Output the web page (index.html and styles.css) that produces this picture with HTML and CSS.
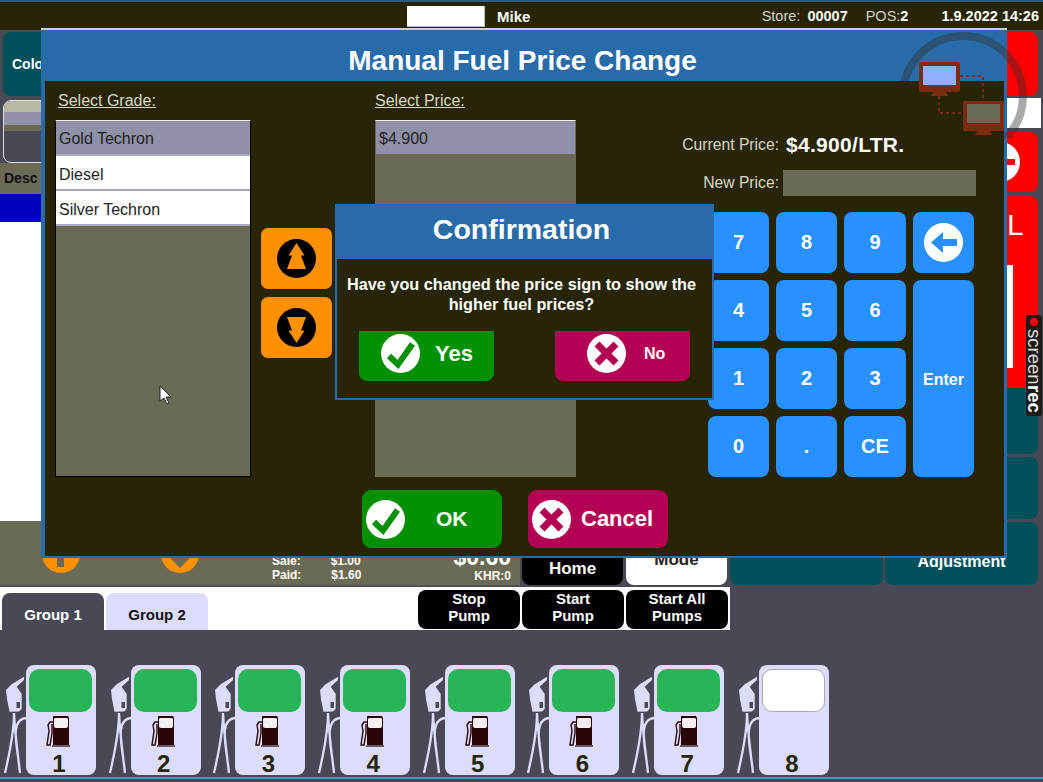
FILE: index.html
```html
<!DOCTYPE html>
<html lang="en">

<head>
    <meta charset="UTF-8">
    <meta name="viewport" content="width=device-width, initial-scale=1.0">
    <title>Manual Fuel Price Change</title>

    <link rel="stylesheet" href="styles.css">
</head>

<body>
    <svg class="defs" width="0" height="0">
        <symbol id="ico-check" viewBox="0 0 39 39">
            <circle cx="19.5" cy="19.5" r="19.5" fill="#fff" />
            <path d="M8 22l9 8.5L31.5 10" fill="none" stroke="#009000" stroke-width="6" />
        </symbol>
        <symbol id="ico-cross" viewBox="0 0 39 39">
            <circle cx="19.5" cy="19.5" r="19.5" fill="#fff" />
            <path d="M10 10l19 19M29 10L10 29" fill="none" stroke="#b40054" stroke-width="7" />
        </symbol>
        <symbol id="ico-nozzle" viewBox="0 0 25 100">
            <path d="M23 1.7L23 5 15.7 11.7 20.7 19V34L18 36.5 8.5 36.7 6 24 5 15 10.7 9.3ZM15.5 27h3.5v6h-3.5z" fill="#dcdcfe" fill-rule="evenodd" />
            <path d="M13 38C13 60 8 80 4 98M13 38C14 60 17 80 19 98M25 43C15 44 14 55 15 65 15.5 75 18 85 19 98" fill="none" stroke="#dcdcfe" stroke-width="2.3" />
        </symbol>
        <symbol id="ico-fuel" viewBox="0 0 24 32">
            <path d="M7 1h15l1 2v27H7z" fill="#2a0505" />
            <path d="M9 3h12l1 1v7q0 2-2 2H10q-2 0-2-2V4z" fill="#f4f0f0" />
            <path d="M6 31h18" stroke="#6a5a5a" stroke-width="2" />
            <path d="M7 7H4L2 10l1 6-2 14h3l2-12V9" fill="none" stroke="#2a0505" stroke-width="1.4" />
        </symbol>
        <clipPath id="ring-clip">
            <path d="M0 0H140V110H108V53H0Z" />
        </clipPath>
    </svg>

    <header class="topbar">
        <div class="user-box"></div>
        <b class="user-name">Mike</b>
        <span class="store">Store: <b>00007</b></span>
        <span class="pos">POS:<b>2</b></span>
        <b class="clock">1.9.2022 14:26</b>
    </header>

    <main class="app">
        <div class="app-left">
            <div class="app-top">
                <div class="color-btn">Colo</div>
                <div class="thumb">
                    <div class="thumb-a"></div>
                    <div class="thumb-b"></div>
                    <div class="thumb-c"></div>
                </div>
            </div>
            <div class="desc-bar">Desc</div>
            <div class="blue-bar"></div>
            <div class="white-list"></div>
            <div class="app-foot">
                <div class="totals">
                    <div class="round-orange"></div>
                    <div class="round-orange second"></div>
                    <div class="sale-lines">
                        <div><span>Sale:</span><span>$1.00</span></div>
                        <div><span>Paid:</span><span>$1.60</span></div>
                    </div>
                    <div class="change">
                        <div class="change-big">$0.60</div>
                        <div>KHR:0</div>
                    </div>
                </div>
                <div class="foot-btn foot-black">Home</div>
                <div class="foot-btn foot-white">Mode</div>
                <div class="foot-btn foot-teal"></div>
            </div>
        </div>
        <div class="app-right">
            <div class="side side-red side-a"></div>
            <div class="side side-white"></div>
            <div class="side side-red side-b"><span class="minus"></span></div>
            <div class="side side-red side-c">
                <span class="side-l">L</span>
                <span class="side-bar"></span>
            </div>
            <div class="side side-teal side-d"></div>
            <div class="side side-teal side-e"></div>
            <div class="side side-teal side-f">Adjustment</div>
        </div>
    </main>

    <section class="tabs-row">
        <div class="tab tab-active">Group 1</div>
        <div class="tab">Group 2</div>
        <div class="pump-btn first">Stop<br>Pump</div>
        <div class="pump-btn">Start<br>Pump</div>
        <div class="pump-btn">Start All<br>Pumps</div>
    </section>

    <section class="pumps">
        <div class="pump">
            <svg class="nozzle"><use href="#ico-nozzle" /></svg>
            <div class="pump-body">
                <div class="pump-screen"></div>
                <svg class="fuel"><use href="#ico-fuel" /></svg>
                <div class="pump-num">1</div>
            </div>
        </div>
        <div class="pump">
            <svg class="nozzle"><use href="#ico-nozzle" /></svg>
            <div class="pump-body">
                <div class="pump-screen"></div>
                <svg class="fuel"><use href="#ico-fuel" /></svg>
                <div class="pump-num">2</div>
            </div>
        </div>
        <div class="pump">
            <svg class="nozzle"><use href="#ico-nozzle" /></svg>
            <div class="pump-body">
                <div class="pump-screen"></div>
                <svg class="fuel"><use href="#ico-fuel" /></svg>
                <div class="pump-num">3</div>
            </div>
        </div>
        <div class="pump">
            <svg class="nozzle"><use href="#ico-nozzle" /></svg>
            <div class="pump-body">
                <div class="pump-screen"></div>
                <svg class="fuel"><use href="#ico-fuel" /></svg>
                <div class="pump-num">4</div>
            </div>
        </div>
        <div class="pump">
            <svg class="nozzle"><use href="#ico-nozzle" /></svg>
            <div class="pump-body">
                <div class="pump-screen"></div>
                <svg class="fuel"><use href="#ico-fuel" /></svg>
                <div class="pump-num">5</div>
            </div>
        </div>
        <div class="pump">
            <svg class="nozzle"><use href="#ico-nozzle" /></svg>
            <div class="pump-body">
                <div class="pump-screen"></div>
                <svg class="fuel"><use href="#ico-fuel" /></svg>
                <div class="pump-num">6</div>
            </div>
        </div>
        <div class="pump">
            <svg class="nozzle"><use href="#ico-nozzle" /></svg>
            <div class="pump-body">
                <div class="pump-screen"></div>
                <svg class="fuel"><use href="#ico-fuel" /></svg>
                <div class="pump-num">7</div>
            </div>
        </div>
        <div class="pump">
            <svg class="nozzle"><use href="#ico-nozzle" /></svg>
            <div class="pump-body">
                <div class="pump-screen idle"></div>
                <div class="fuel"></div>
                <div class="pump-num">8</div>
            </div>
        </div>
    </section>
    <div class="bottom-line"></div>

    <!-- price change window, lies over the till screen -->
    <div class="modal">
        <h1 class="modal-title">Manual Fuel Price Change</h1>
        <div class="panel">
            <div class="panel-main">
                <div class="pick-col">
                    <div class="pick-label">Select Grade:</div>
                    <div class="pick-list">
                        <div class="pick-item selected">Gold Techron</div>
                        <div class="pick-item">Diesel</div>
                        <div class="pick-item">Silver Techron</div>
                    </div>
                </div>
                <div class="arrow-col">
                    <div class="arrow-btn">
                        <svg width="39" height="39" viewBox="0 0 39 39">
                            <circle cx="19.5" cy="19.5" r="19.5" fill="#000" />
                            <path d="M19.5 4L27.5 16.5h-3.5l5 13.5H10l5-13.5h-3.5z" fill="#ff9000" />
                        </svg>
                    </div>
                    <div class="arrow-btn">
                        <svg width="39" height="39" viewBox="0 0 39 39">
                            <circle cx="19.5" cy="19.5" r="19.5" fill="#000" />
                            <path d="M19.5 35L27.5 22.5h-3.5l5-13.5H10l5 13.5h-3.5z" fill="#ff9000" />
                        </svg>
                    </div>
                </div>
                <div class="pick-col price-col">
                    <div class="pick-label">Select Price:</div>
                    <div class="pick-list">
                        <div class="pick-item selected">$4.900</div>
                    </div>
                </div>
                <div class="entry-col">
                    <div class="price-row current">
                        <span class="price-label">Current Price:</span>
                        <b class="price-value">$4.900/LTR.</b>
                    </div>
                    <div class="price-row">
                        <span class="price-label">New Price:</span>
                        <div class="price-field"></div>
                    </div>
                    <div class="keypad">
                        <div class="key">7</div>
                        <div class="key">8</div>
                        <div class="key">9</div>
                        <div class="key">
                            <svg width="39" height="39" viewBox="0 0 39 39">
                                <circle cx="19.5" cy="19.5" r="19.5" fill="#fff" />
                                <path d="M7 19.5L19 9v7h14v7H19v7z" fill="#2890ff" />
                            </svg>
                        </div>
                        <div class="key">4</div>
                        <div class="key">5</div>
                        <div class="key">6</div>
                        <div class="key key-enter">Enter</div>
                        <div class="key">1</div>
                        <div class="key">2</div>
                        <div class="key">3</div>
                        <div class="key">0</div>
                        <div class="key">.</div>
                        <div class="key">CE</div>
                    </div>
                </div>
            </div>
            <div class="panel-actions">
                <div class="btn btn-green btn-ok">
                    <svg class="btn-ico"><use href="#ico-check" /></svg>
                    <span>OK</span>
                </div>
                <div class="btn btn-red btn-cancel">
                    <svg class="btn-ico"><use href="#ico-cross" /></svg>
                    <span>Cancel</span>
                </div>
            </div>
        </div>
    </div>

    <svg class="netmark" width="140" height="110" viewBox="0 0 140 110">
        <circle cx="68" cy="68" r="60" fill="none" stroke="rgba(50,50,50,.42)" stroke-width="8" clip-path="url(#ring-clip)" />
        <g fill="none" stroke="#7a2c10" stroke-width="2" stroke-dasharray="3 3">
            <path d="M65 48h23v25" />
            <path d="M44 68v17h24" />
        </g>
        <rect x="24" y="34" width="41" height="30" rx="2" fill="#7a2c10" />
        <rect x="28" y="38" width="33" height="19" fill="#90b0ff" />
        <path d="M38 64h13l2 4H36z" fill="#7a2c10" />
        <rect x="68" y="73" width="41" height="30" rx="2" fill="#7a2c10" />
        <rect x="72" y="76" width="33" height="19" fill="#6b6b55" />
        <path d="M82 103h13l2 4H80z" fill="#7a2c10" />
    </svg>

    <div class="confirm">
        <h2 class="confirm-title">Confirmation</h2>
        <div class="confirm-body">
            <p class="confirm-text">Have you changed the price sign to show the higher fuel prices?</p>
            <div class="confirm-actions">
                <div class="btn btn-green btn-yes">
                    <svg class="btn-ico"><use href="#ico-check" /></svg>
                    <span>Yes</span>
                </div>
                <div class="btn btn-red btn-no">
                    <svg class="btn-ico"><use href="#ico-cross" /></svg>
                    <span>No</span>
                </div>
            </div>
        </div>
    </div>

    <svg class="cursor" width="14" height="20" viewBox="0 0 14 20">
        <path d="M1 1v15l4-3 3 6 2-1-3-6h5z" fill="#fff" stroke="#222" stroke-width="1" />
    </svg>

    <div class="rec-badge"><i class="rec-dot"></i>screen<b>rec</b></div>
</body>

</html>
```

FILE: styles.css
```css
* {
    box-sizing: border-box;
}

html,
body {
    margin: 0;
    height: 100%;
}

body {
    position: relative;
    width: 1043px;
    height: 782px;
    overflow: hidden;
    background-color: #494955;
    font-family: "Liberation Sans", Arial, sans-serif;
    color: #fff;
}

.defs {
    position: absolute;
}

/* top bar */
.topbar {
    display: flex;
    align-items: center;
    height: 30px;
    border-top: 2px solid #2f5a78;
    background-color: #272503;
    font-size: 14.5px;
    color: #d4d4c8;
}

.topbar b {
    color: #fff;
}

.store b {
    margin-left: 3px;
}

.user-box {
    width: 78px;
    height: 21px;
    margin-left: 407px;
    background-color: #fff;
    border-right: 1px solid #bbb;
    border-bottom: 1px solid #bbb;
}

.user-name {
    margin-left: 12px;
    font-size: 15px;
}

.store {
    margin-left: auto;
}

.pos {
    margin-left: 18px;
}

.clock {
    margin-left: 33px;
    margin-right: 4px;
}

/* till screen behind the windows */
.app {
    display: flex;
    height: 555px;
    margin-top: 2px;
}

.app-left {
    display: flex;
    flex-direction: column;
    width: 885px;
}

.app-top {
    height: 131px;
    padding: 0 0 0 3px;
}

.color-btn {
    width: 120px;
    height: 64px;
    padding: 0 0 0 9px;
    border-radius: 8px;
    background-color: #00505c;
    font-size: 14px;
    font-weight: bold;
    line-height: 64px;
}

.thumb {
    width: 120px;
    height: 63px;
    margin-top: 4px;
    overflow: hidden;
    border: 1px solid #ddd;
    border-radius: 8px;
    background-color: #494955;
}

.thumb-a {
    height: 11px;
    background-color: #b8b8a4;
}

.thumb-b {
    height: 13px;
    background-color: #9090a8;
}

.thumb-c {
    height: 6px;
    background-color: #6b6b55;
}

.desc-bar {
    height: 31px;
    padding-left: 4px;
    background-color: #6b6b55;
    color: #111;
    font-size: 14px;
    font-weight: bold;
    line-height: 30px;
}

.blue-bar {
    height: 28px;
    background-color: #0000c0;
}

.white-list {
    height: 299px;
    background-color: #fff;
}

.app-foot {
    display: flex;
    gap: 2px;
    height: 65px;
}

.totals {
    position: relative;
    display: flex;
    width: 520px;
    background-color: #6b6b55;
    border-bottom: 1px solid #555;
    font-size: 12px;
    font-weight: bold;
}

.round-orange {
    position: relative;
    width: 38px;
    height: 38px;
    margin: 14px 0 0 42px;
    border-radius: 50%;
    background-color: #ff9000;
}

.round-orange::after {
    content: "";
    position: absolute;
    left: 15px;
    top: 15px;
    width: 7px;
    height: 17px;
    background-color: #6b6b55;
}

.round-orange.second {
    margin-left: 81px;
}

.round-orange.second::after {
    left: 8px;
    top: 22px;
    width: 22px;
    height: 11px;
    clip-path: polygon(0 0, 100% 0, 50% 100%);
}

.sale-lines {
    width: 100px;
    margin: 33px 0 0 73px;
    line-height: 14px;
}

.sale-lines div {
    display: flex;
    gap: 30px;
}

.change {
    margin: 24px 9px 0 auto;
    text-align: right;
    line-height: 14px;
}

.change-big {
    font-size: 23px;
    line-height: 24px;
}

.foot-btn {
    display: flex;
    align-items: flex-end;
    justify-content: center;
    width: 101px;
    height: 64px;
    border-radius: 8px;
    font-size: 17px;
    font-weight: bold;
}

.foot-black {
    padding-bottom: 6px;
    background-color: #000;
}

.foot-white {
    margin-left: 1px;
    padding-bottom: 15px;
    background-color: #fff;
    color: #222;
}

.foot-teal {
    width: 153px;
    margin-left: 1px;
    background-color: #00505c;
}

.app-right {
    display: flex;
    flex-direction: column;
    width: 153px;
}

.side {
    border-radius: 8px;
    flex: none;
}

.side-red {
    position: relative;
    overflow: hidden;
    background-color: #ff0000;
}

.side-teal {
    background-color: #00505c;
}

.side-a {
    height: 64px;
}

.side-white {
    width: 156px;
    height: 30px;
    margin-top: 2px;
    border-radius: 0;
    background-color: #fff;
}

.side-b {
    height: 60px;
    margin-top: 4px;
}

.minus {
    position: absolute;
    right: 18px;
    top: 10px;
    width: 40px;
    height: 40px;
    border-radius: 50%;
    background-color: #fff;
}

.minus::after {
    content: "";
    position: absolute;
    right: 5px;
    top: 17px;
    width: 30px;
    height: 6px;
    background-color: #ff0000;
}

.side-c {
    height: 192px;
    margin-top: 4px;
}

.side-l {
    position: absolute;
    left: 122px;
    top: 12px;
    font-size: 30px;
}

.side-bar {
    position: absolute;
    left: 122px;
    top: 69px;
    width: 6px;
    height: 103px;
    background-color: #fff;
}

.side-d {
    height: 66px;
}

.side-e {
    height: 62px;
    margin-top: 3px;
}

.side-f {
    height: 63px;
    margin-top: 3px;
    padding-top: 31px;
    font-size: 16px;
    font-weight: bold;
    text-align: center;
}

/* group tabs and pump buttons */
.tabs-row {
    display: flex;
    align-items: flex-end;
    width: 730px;
    height: 43px;
    padding-left: 2px;
    background-color: #fff;
}

.tab {
    width: 102px;
    height: 37px;
    margin-right: 2px;
    border-radius: 8px 8px 0 0;
    background-color: #dcdcfe;
    color: #111;
    font-size: 15px;
    font-weight: bold;
    line-height: 44px;
    text-align: center;
}

.tab-active {
    background-color: #494955;
    color: #fff;
}

.pump-btn {
    width: 102px;
    height: 39px;
    margin: 0 2px 1px 0;
    border-radius: 8px;
    background-color: #000;
    font-size: 15px;
    font-weight: bold;
    line-height: 17px;
    text-align: center;
}

.pump-btn.first {
    margin-left: 208px;
}

/* pumps row */
.pumps {
    display: flex;
    height: 145px;
    padding: 35px 0 0 1px;
}

.pump {
    display: flex;
    width: 104.7px;
    flex: none;
}

.nozzle {
    width: 25px;
    height: 100px;
    margin-top: 10px;
    flex: none;
}

.pump-body {
    width: 70px;
    height: 110px;
    padding: 4px 4px 0 3px;
    border-radius: 8px;
    background-color: #dcdcfe;
    text-align: center;
}

.pump-screen {
    height: 43px;
    border-radius: 10px;
    background-color: #27b558;
}

.pump-screen.idle {
    border: 1px solid #aaa;
    background-color: #fff;
}

.fuel {
    display: block;
    width: 24px;
    height: 32px;
    margin: 3px 0 0 17px;
}

.pump-num {
    padding-right: 3px;
    color: #272503;
    font-size: 24px;
    font-weight: bold;
    line-height: 26px;
    margin-top: 4px;
}

.bottom-line {
    height: 2px;
    margin-top: 2px;
    background-color: #3aa0c0;
}

/* price change window */
.modal {
    position: absolute;
    left: 41px;
    top: 28px;
    width: 966px;
    height: 530px;
    padding: 0 3px 2px 4px;
    border-top: 2px solid #c8d0d0;
    background-color: #276ba8;
    display: flex;
    flex-direction: column;
}

.modal-title {
    height: 51px;
    margin: 0;
    padding-right: 4px;
    font-size: 28px;
    line-height: 62px;
    text-align: center;
}

.panel {
    flex: 1;
    padding: 9px 28px 0 10px;
    background-color: #272503;
}

.panel-main {
    display: flex;
    height: 387px;
}

.pick-col {
    width: 196px;
}

.price-col {
    width: 201px;
    margin-left: 43px;
}

.pick-label {
    height: 30px;
    padding-left: 3px;
    color: #d8d8c8;
    font-size: 16px;
    line-height: 22px;
    text-decoration: underline;
}

.price-col .pick-label {
    padding-left: 0;
}

.pick-list {
    height: 357px;
    border: 1px solid #000;
    border-top-color: #eee;
    background-color: #6b6b55;
}

.price-col .pick-list {
    border-color: #6b6b55;
    border-top-color: #eee;
}

.pick-item {
    height: 35px;
    padding-left: 3px;
    border-bottom: 2px solid #a8a8c0;
    background-color: #fff;
    color: #222;
    font-size: 16px;
    line-height: 37px;
}

.pick-item.selected {
    background-color: #9090a8;
    border-bottom-color: #a8a8c0;
    line-height: 35px;
}

.price-col .pick-item.selected {
    border-bottom-color: #6b6b55;
}

.arrow-col {
    display: flex;
    flex-direction: column;
    gap: 8px;
    width: 71px;
    margin-left: 10px;
    padding-top: 138px;
}

.arrow-btn {
    display: flex;
    align-items: center;
    justify-content: center;
    height: 61px;
    border-radius: 7px;
    background-color: #ff9000;
}

.entry-col {
    width: 296px;
    margin-left: auto;
}

.price-row {
    display: flex;
    align-items: center;
    gap: 4px;
    height: 26px;
    margin-top: 12px;
    color: #d8d8c8;
    font-size: 15.7px;
}

.price-row.current {
    margin-top: 42px;
}

.price-label {
    width: 99px;
    text-align: right;
    white-space: nowrap;
}

.price-value {
    margin-left: 3px;
    color: #fff;
    font-size: 21px;
    letter-spacing: 0.3px;
}

.price-field {
    width: 193px;
    height: 26px;
    background-color: #6b6b55;
}

.keypad {
    display: grid;
    grid-template-columns: 61px 61px 62px 61px;
    grid-auto-rows: 61px;
    gap: 7px;
    margin: 16px 0 0 28px;
}

.key {
    display: flex;
    align-items: center;
    justify-content: center;
    border-radius: 8px;
    background-color: #2890ff;
    font-size: 20px;
    font-weight: bold;
}

.key-enter {
    grid-column: 4;
    grid-row: 2 / span 3;
    padding-top: 2px;
    font-size: 16px;
}

.panel-actions {
    display: flex;
    gap: 26px;
    margin: 13px 0 0 307px;
}

.btn {
    display: flex;
    align-items: center;
    font-weight: bold;
}

.btn-ico {
    width: 39px;
    height: 39px;
    flex: none;
}

.btn-green {
    background-color: #009000;
}

.btn-red {
    background-color: #b40054;
}

.btn-ok,
.btn-cancel {
    width: 140px;
    height: 58px;
    padding-left: 4px;
    border-radius: 9px;
    font-size: 22px;
}

.btn-ok {
    font-size: 21px;
}

.btn-ok span {
    margin-left: 31px;
}

.btn-cancel span {
    margin-left: 10px;
}

/* logo mark over the window corner */
.netmark {
    position: absolute;
    left: 895px;
    top: 28px;
    pointer-events: none;
}

/* confirmation box */
.confirm {
    position: absolute;
    left: 335px;
    top: 204px;
    width: 379px;
    height: 196px;
    padding: 0 2px 2px;
    background-color: #276ba8;
    display: flex;
    flex-direction: column;
}

.confirm-title {
    height: 55px;
    margin: 0;
    padding-right: 6px;
    font-size: 28.5px;
    line-height: 50px;
    text-align: center;
}

.confirm-body {
    flex: 1;
    background-color: #272503;
}

.confirm-text {
    margin: 15px 11px 0 5px;
    font-size: 16.3px;
    font-weight: bold;
    line-height: 20px;
    text-align: center;
}

.confirm-actions {
    display: flex;
    justify-content: space-between;
    margin: 17px 22px 0;
}

.btn-yes,
.btn-no {
    align-items: flex-start;
    width: 135px;
    height: 50px;
    padding-top: 3px;
    border-radius: 0 0 8px 8px;
    line-height: 39px;
}

.btn-yes {
    padding-left: 22px;
    font-size: 22px;
}

.btn-yes span {
    margin-left: 15px;
}

.btn-no {
    padding-left: 32px;
    font-size: 16px;
}

.btn-no span {
    margin-left: 18px;
}

.cursor {
    position: absolute;
    left: 159px;
    top: 385px;
}

.rec-badge {
    position: absolute;
    left: 1026px;
    top: 315px;
    display: flex;
    align-items: center;
    width: 16px;
    height: 101px;
    padding-top: 3px;
    border-radius: 3px;
    background-color: #1c1c14;
    color: #ddd;
    font-size: 18.5px;
    line-height: 16px;
    writing-mode: vertical-rl;
}

.rec-badge b {
    color: #fff;
}

.rec-dot {
    width: 8px;
    height: 8px;
    margin-bottom: 3px;
    border-radius: 50%;
    background-color: #ff0000;
}
```
